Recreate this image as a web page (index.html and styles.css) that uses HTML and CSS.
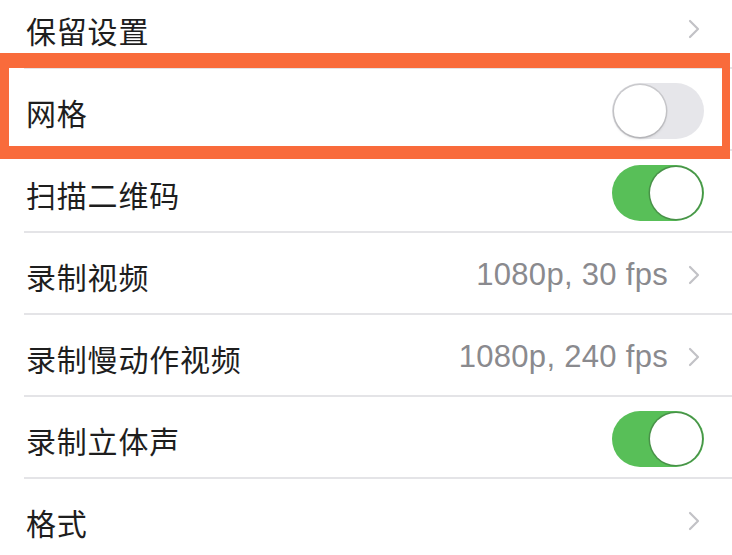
FILE: index.html
```html
<!DOCTYPE html>
<html lang="zh-CN">
<head>
    <meta charset="UTF-8">
    <meta name="viewport" content="width=device-width, initial-scale=1.0">
    <title>相机设置</title>
    <link rel="stylesheet" href="styles.css">
</head>
<body>
    <ul class="settings">
        <li class="row">
            <div class="row-inner">
                <span class="label">保留设置</span>
                <span class="chevron"><svg width="12" height="20" viewBox="0 0 12 20"><path d="M2 2 L10 10 L2 18" fill="none" stroke="#c2c2c6" stroke-width="2.2" stroke-linecap="round" stroke-linejoin="round"/></svg></span>
            </div>
        </li>
        <li class="row highlighted">
            <div class="row-inner">
                <span class="label">网格</span>
                <span class="switch"><span class="knob"></span></span>
            </div>
            <div class="highlight-box"></div>
        </li>
        <li class="row">
            <div class="row-inner">
                <span class="label">扫描二维码</span>
                <span class="switch on"><span class="knob"></span></span>
            </div>
        </li>
        <li class="row">
            <div class="row-inner">
                <span class="label">录制视频</span>
                <span class="value">1080p, 30 fps</span>
                <span class="chevron"><svg width="12" height="20" viewBox="0 0 12 20"><path d="M2 2 L10 10 L2 18" fill="none" stroke="#c2c2c6" stroke-width="2.2" stroke-linecap="round" stroke-linejoin="round"/></svg></span>
            </div>
        </li>
        <li class="row">
            <div class="row-inner">
                <span class="label">录制慢动作视频</span>
                <span class="value">1080p, 240 fps</span>
                <span class="chevron"><svg width="12" height="20" viewBox="0 0 12 20"><path d="M2 2 L10 10 L2 18" fill="none" stroke="#c2c2c6" stroke-width="2.2" stroke-linecap="round" stroke-linejoin="round"/></svg></span>
            </div>
        </li>
        <li class="row">
            <div class="row-inner">
                <span class="label">录制立体声</span>
                <span class="switch on"><span class="knob"></span></span>
            </div>
        </li>
        <li class="row">
            <div class="row-inner">
                <span class="label">格式</span>
                <span class="chevron"><svg width="12" height="20" viewBox="0 0 12 20"><path d="M2 2 L10 10 L2 18" fill="none" stroke="#c2c2c6" stroke-width="2.2" stroke-linecap="round" stroke-linejoin="round"/></svg></span>
            </div>
        </li>
    </ul>
</body>
</html>
```

FILE: styles.css
```css
body {
    margin: 0;
    padding: 0;
    background-color: #fff;
    font-family: "Liberation Sans", "Noto Sans CJK SC", sans-serif;
    overflow: hidden;
}
.settings {
    list-style: none;
    margin: -13px 0 0 0;
    padding: 0;
}
.row {
    position: relative;
    padding-left: 24px;
}
.row-inner {
    display: flex;
    align-items: center;
    height: 80px;
    padding-right: 32px;
    border-bottom: 2px solid #e4e4e7;
}
.label {
    flex: 1;
    padding-left: 2px;
    padding-top: 6px;
    font-family: "Noto Sans CJK SC", sans-serif;
    font-size: 30px;
    letter-spacing: 0.8px;
    color: #1e1e1e;
}
.value {
    font-size: 31px;
    letter-spacing: 0.3px;
    color: #8a8a8e;
    margin-right: 20px;
    padding-top: 4px;
}
.chevron {
    display: flex;
    padding-top: 4px;
}
.switch {
    position: relative;
    width: 92px;
    height: 56px;
    border-radius: 28px;
    background-color: #e6e6ea;
    margin-right: -4px;
    margin-top: 4px;
}
.switch .knob {
    position: absolute;
    top: 2px;
    left: 2px;
    width: 52px;
    height: 52px;
    border-radius: 50%;
    background-color: #fff;
    box-shadow: 0 0 0 1.5px rgba(0, 0, 0, 0.12), 0 2px 3px rgba(0, 0, 0, 0.12);
}
.switch.on {
    background-color: #58bf58;
}
.switch.on .knob {
    left: auto;
    right: 2px;
    box-shadow: 0 0 0 1.5px rgba(60, 110, 60, 0.55);
}
.highlight-box {
    position: absolute;
    top: -16px;
    left: 0;
    width: 713px;
    height: 78px;
    border-style: solid;
    border-color: #f96b3b;
    border-width: 15px 8px 13px 9px;
}
```
